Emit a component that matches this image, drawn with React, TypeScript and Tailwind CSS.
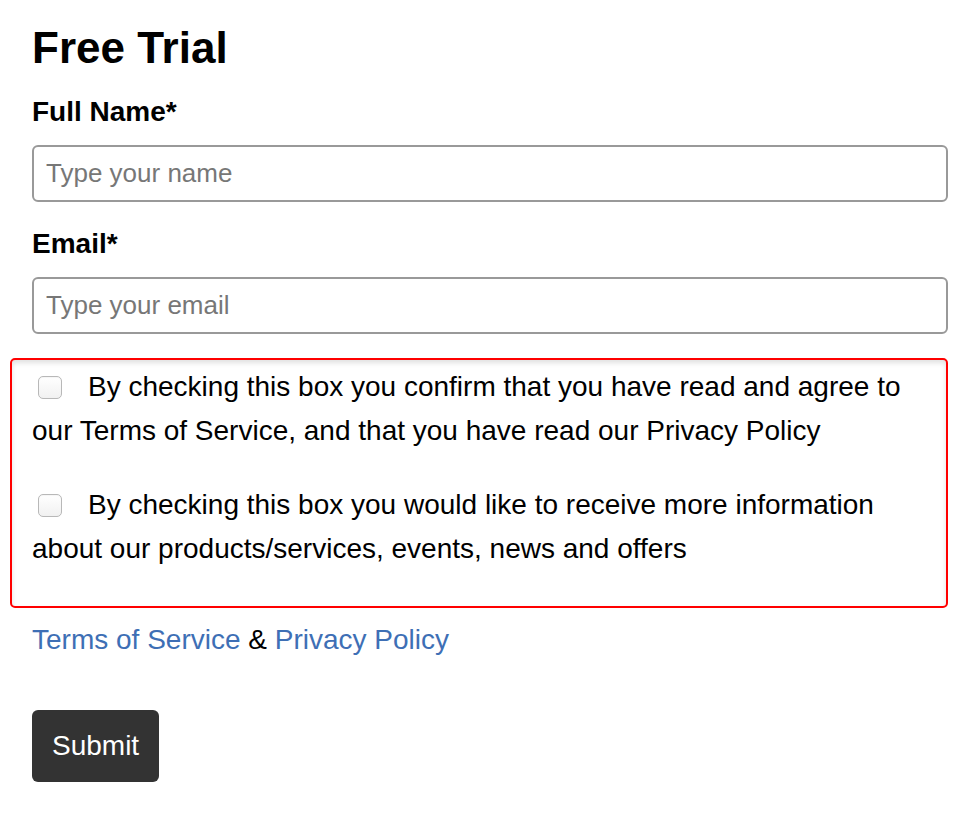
import { useState } from 'react'

function Check({ checked, onChange }: { checked: boolean; onChange: () => void }) {
  return (
    <input
      type="checkbox"
      checked={checked}
      onChange={onChange}
      className="appearance-none w-[24px] h-[23px] ml-[6px] mr-[26px] align-[-3px] rounded-[5px] border border-[#b8b8b8]
                 bg-gradient-to-b from-white to-[#f1f1f1] shadow-[inset_0_1px_1px_rgba(0,0,0,0.04)]"
    />
  )
}

export default function App() {
  const [name, setName] = useState('')
  const [email, setEmail] = useState('')
  const [terms, setTerms] = useState(false)
  const [news, setNews] = useState(false)

  return (
    <div className="min-h-screen bg-white text-black px-[32px] pt-[23px] font-['Liberation_Sans',Arial,sans-serif]">
      <h1 className="text-[44px] leading-[50px] font-bold">Free Trial</h1>

      {/* Name */}
      <label className="block mt-[17px] text-[28px] leading-[44px] font-bold">Full Name*</label>
      <input
        type="text"
        value={name}
        onChange={(e) => setName(e.target.value)}
        placeholder="Type your name"
        className="block w-full h-[57px] mt-[11px] px-[12px] border-2 border-[#999] rounded-[6px]
                   text-[26px] placeholder-[#777] focus:outline-none"
      />

      {/* Email */}
      <label className="block mt-[20px] text-[28px] leading-[44px] font-bold">Email*</label>
      <input
        type="email"
        value={email}
        onChange={(e) => setEmail(e.target.value)}
        placeholder="Type your email"
        className="block w-full h-[57px] mt-[11px] px-[12px] border-2 border-[#999] rounded-[6px]
                   text-[26px] placeholder-[#777] focus:outline-none"
      />

      {/* Consent */}
      <div className="mt-[24px] -ml-[22px] pl-[20px] pr-[20px] pt-[5px] pb-[5px] border-2 border-[#f00] rounded-[5px]
                      shadow-[inset_0_3px_5px_rgba(0,0,0,0.12)] text-[28px] leading-[44px]">
        <p className="mb-[30px]">
          <Check checked={terms} onChange={() => setTerms(!terms)} />
          By checking this box you confirm that you have read and agree to our Terms of Service, and that you have
          read our Privacy Policy
        </p>
        <p className="mb-[30px]">
          <Check checked={news} onChange={() => setNews(!news)} />
          By checking this box you would like to receive more information about our products/services, events, news
          and offers
        </p>
      </div>

      <p className="mt-[10px] text-[28px] leading-[44px]">
        <a href="#" className="text-[#3e6fb5]">Terms of Service</a> &amp;{' '}
        <a href="#" className="text-[#3e6fb5]">Privacy Policy</a>
      </p>

      <button className="mt-[48px] h-[72px] px-[20px] bg-[#333] text-white text-[28px] rounded-[6px]">Submit</button>
    </div>
  )
}
